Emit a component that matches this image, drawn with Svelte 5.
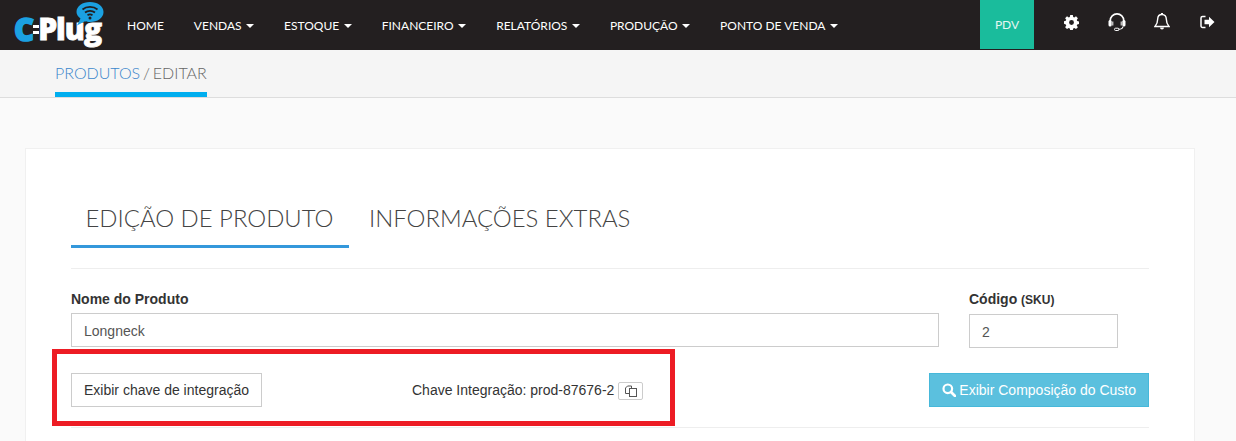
<script lang="ts">
	const menu = [
		{ label: 'HOME', caret: false },
		{ label: 'VENDAS', caret: true },
		{ label: 'ESTOQUE', caret: true },
		{ label: 'FINANCEIRO', caret: true },
		{ label: 'RELATÓRIOS', caret: true },
		{ label: 'PRODUÇÃO', caret: true },
		{ label: 'PONTO DE VENDA', caret: true }
	];
</script>

<div class="page">
	<nav class="navbar">
		<div class="logo">
			<span class="logo-c">C</span><span class="logo-dash"></span><span class="logo-plug">Plug</span>
			<svg class="logo-wifi" width="30" height="26" viewBox="0 0 30 26">
				<path d="M15 1c7.500 0 13.500 4 13.500 10S22.500 21 15 21c-2 0-3.500-.2-5-.8L2 24.500l3.500-7C3 15.500 1.500 13.500 1.500 11 1.500 5 7.500 1 15 1z" fill="#1ba1e2" />
				<path d="M7.500 8.500c4-3.500 11-3.500 15 0M10 11.500c2.800-2.300 7.200-2.300 10 0M12.500 14.300c1.400-1 3.600-1 5 0" fill="none" stroke="#231f20" stroke-width="1.700" />
				<circle cx="15" cy="17" r="1.500" fill="#231f20" />
			</svg>
		</div>
		<ul class="menu">
			{#each menu as item}
				<li>{item.label}{#if item.caret}<span class="caret"></span>{/if}</li>
			{/each}
		</ul>
		<div class="pdv">PDV</div>
		<div class="icons">
			<svg width="15" height="15" viewBox="0 0 16 16">
				<path fill-rule="evenodd" fill="#fff" d="M6.600 0h2.800l.4 2.100 1.200.5L12.800 1.400l2 2-1.200 1.800.5 1.200 1.900.4v2.800l-1.900.4-.5 1.200 1.200 1.800-2 2-1.800-1.200-1.200.5-.4 1.900H6.600l-.4-1.900-1.200-.5-1.800 1.200-2-2 1.200-1.800-.5-1.200L0 9.400V6.600l1.900-.4.5-1.200L1.200 3.400l2-2L5 2.600l1.200-.5zM8 5.400a2.600 2.600 0 1 0 0 5.200 2.600 2.600 0 0 0 0-5.200z" />
			</svg>
			<svg width="18" height="18" viewBox="0 0 18 18">
				<path d="M2.200 10V7.700a6.800 6.800 0 0 1 13.600 0V10" fill="none" stroke="#fff" stroke-width="1.600" />
				<rect x="0.500" y="7" width="3.200" height="6.500" rx="1.600" fill="#fff" />
				<rect x="14.300" y="7" width="3.200" height="6.500" rx="1.600" fill="#fff" />
				<rect x="4.300" y="8.500" width="1" height="4" fill="#fff" />
				<rect x="12.700" y="8.500" width="1" height="4" fill="#fff" />
				<path d="M15 13.500c-.3 2-2 2.800-4.500 2.800" fill="none" stroke="#fff" stroke-width="1.100" />
				<rect x="6.500" y="15.200" width="4.500" height="2.300" rx="1.100" fill="none" stroke="#fff" stroke-width="1" />
			</svg>
			<svg class="bell" width="16" height="18" viewBox="0 0 16 18">
				<path d="M8 1.500c-2.800 0-4.300 2-4.300 4.500 0 3.800-1 5.500-2.700 7.500h14c-1.700-2-2.700-3.700-2.700-7.500 0-2.500-1.500-4.500-4.300-4.500z" fill="none" stroke="#fff" stroke-width="1.400" />
				<rect x="7" y="0" width="2" height="2" fill="#fff" />
				<path d="M6 14.500h4a2 2 0 0 1-4 0z" fill="#fff" />
			</svg>
			<svg width="15" height="14" viewBox="0 0 15 14">
				<path d="M5.500 1.500H2.500a1.500 1.500 0 0 0-1.500 1.500v8a1.500 1.500 0 0 0 1.500 1.500h3" fill="none" stroke="#fff" stroke-width="1.500" />
				<path d="M4.500 4.800h4.500V1.700L14.500 7 9 12.300V9.200H4.500z" fill="#fff" />
			</svg>
		</div>
	</nav>

	<div class="subheader">
		<div class="crumb"><span class="crumb-link">PRODUTOS</span> / EDITAR</div>
	</div>

	<main class="content">
		<section class="card">
			<div class="tabs">
				<div class="tab active">EDIÇÃO DE PRODUTO</div>
				<div class="tab">INFORMAÇÕES EXTRAS</div>
			</div>

			<div class="fields">
				<div class="field name">
					<span class="label">Nome do Produto</span>
					<input type="text" value="Longneck" />
				</div>
				<div class="field sku">
					<span class="label">Código <small>(SKU)</small></span>
					<input type="text" value="2" />
				</div>
			</div>

			<div class="actions">
				<button class="btn">Exibir chave de integração</button>
				<div class="key">
					Chave Integração: prod-87676-2
					<span class="copy">
						<svg width="14" height="12" viewBox="0 0 14 12">
							<path d="M1.500 8.500V3L3.500 1H7.500V4" fill="none" stroke="#555" stroke-width="1" />
							<path d="M1.500 8.500H5" fill="none" stroke="#555" stroke-width="1" />
							<rect x="5.500" y="3.500" width="7" height="8" fill="#fff" stroke="#555" stroke-width="1" />
						</svg>
					</span>
				</div>
				<button class="btn btn-info">
					<svg width="14" height="14" viewBox="0 0 14 14">
						<circle cx="5.800" cy="5.800" r="4.300" fill="none" stroke="#fff" stroke-width="2.200" />
						<path d="M9 9l4 4" stroke="#fff" stroke-width="2.600" stroke-linecap="round" />
					</svg>
					Exibir Composição do Custo
				</button>
			</div>

			<div class="highlight"></div>
		</section>
	</main>
</div>

<style>
	:global(body) {
		margin: 0;
		background: #fafafa;
	}

	.page {
		height: 441px;
		overflow: hidden;
		font-family: 'Liberation Sans', Arial, sans-serif;
		font-size: 14px;
		color: #333;
	}

	.navbar {
		display: flex;
		align-items: center;
		height: 50px;
		background: #231f20;
		font-family: Lato, sans-serif;
	}

	.logo {
		position: relative;
		display: flex;
		align-items: center;
		width: 127px;
		height: 50px;
		padding-left: 14px;
		box-sizing: border-box;
		font-family: 'Open Sans', sans-serif;
		font-weight: 800;
		font-size: 31px;
		letter-spacing: -1px;
		line-height: 1;
	}

	.logo-c {
		color: #1ba1e2;
		margin-top: 8px;
		-webkit-text-stroke: 1.500px #1ba1e2;
	}

	.logo-dash {
		box-sizing: border-box;
		width: 6px;
		height: 9px;
		margin: 9px -1px 0 0;
		border-top: 3px solid #fff;
		border-bottom: 3px solid #fff;
	}

	.logo-plug {
		color: #fff;
		margin-top: 7px;
		-webkit-text-stroke: 0.800px #fff;
		font-size: 30px;
	}

	.logo-wifi {
		position: absolute;
		left: 75px;
		top: 1px;
	}

	.menu {
		display: flex;
		gap: 30px;
		margin: 0;
		padding: 0;
		list-style: none;
		width: 853px;
		color: #fff;
		font-size: 12px;
	}

	.caret {
		display: inline-block;
		margin-left: 4.500px;
		vertical-align: middle;
		border-top: 4px solid #fff;
		border-left: 4px solid transparent;
		border-right: 4px solid transparent;
	}

	.pdv {
		display: flex;
		align-items: center;
		justify-content: center;
		width: 54px;
		height: 49px;
		align-self: flex-start;
		background: #1abc9c;
		color: #e6f7f3;
		font-size: 12px;
	}

	.icons {
		display: flex;
		align-items: center;
		gap: 29px;
		margin-left: 30px;
		margin-top: -6px;
	}

	.bell {
		margin: 0 1px 0 -1px;
	}

	.subheader {
		height: 47px;
		background: #f5f5f5;
		border-bottom: 1px solid #ddd;
		padding-left: 55px;
		font-family: Lato, sans-serif;
	}

	.crumb {
		display: inline-block;
		box-sizing: border-box;
		width: 152px;
		height: 47px;
		padding-top: 13px;
		border-bottom: 5px solid #00aeef;
		font-size: 16px;
		font-weight: 300;
		color: #666;
		white-space: nowrap;
		word-spacing: -1.500px;
	}

	.crumb-link {
		color: #3b87cc;
	}

	.content {
		padding: 50px 41px 0 25px;
	}

	.card {
		position: relative;
		background: #fff;
		border: 1px solid #f0f0f0;
		padding: 35px 45px 0;
		height: 300px;
		box-sizing: border-box;
	}

	.tabs {
		display: flex;
		gap: 5px;
		height: 84px;
		border-bottom: 1px solid #eee;
		font-family: Lato, sans-serif;
		font-size: 23.900px;
		font-weight: 300;
		color: #444;
	}

	.tab {
		box-sizing: border-box;
		height: 64px;
		padding: 19px 16px 0 15px;
		white-space: nowrap;
	}

	.tab.active {
		padding-left: 14.500px;
		padding-right: 15.500px;
		border-bottom: 3px solid #3498db;
	}

	.fields {
		display: flex;
		gap: 30px;
		margin-top: 23px;
	}

	.field {
		display: flex;
		flex-direction: column;
		gap: 6px;
	}

	.name {
		width: 868px;
	}

	.sku {
		width: 149px;
	}

	.label {
		font-weight: 700;
		font-size: 14px;
		line-height: 15px;
		color: #333;
	}

	.label small {
		font-size: 12px;
	}

	input {
		box-sizing: border-box;
		width: 100%;
		height: 34px;
		padding: 1px 12px 0;
		border: 1px solid #ccc;
		border-radius: 0;
		font-family: inherit;
		font-size: 14px;
		color: #555;
	}

	.actions {
		display: flex;
		align-items: center;
		height: 34px;
		margin-top: 25px;
		padding-bottom: 20px;
		border-bottom: 1px solid #eee;
	}

	.btn {
		box-sizing: border-box;
		height: 34px;
		padding: 0 12px;
		background: #fff;
		border: 1px solid #ccc;
		font-family: inherit;
		font-size: 14px;
		color: #333;
		white-space: nowrap;
	}

	.btn-info {
		display: flex;
		align-items: center;
		gap: 3px;
		margin-left: auto;
		background: #5bc0de;
		border-color: #46b8da;
		color: #fff;
	}

	.key {
		display: flex;
		align-items: center;
		gap: 4px;
		margin-left: 150px;
	}

	.copy {
		display: flex;
		align-items: center;
		justify-content: center;
		width: 25px;
		height: 18px;
		margin-top: 2px;
		border: 1px solid #ccc;
		border-radius: 2px;
		box-sizing: border-box;
	}

	.highlight {
		position: absolute;
		left: 26px;
		top: 200px;
		width: 623px;
		height: 77px;
		box-sizing: border-box;
		border: 5px solid #ed1c24;
	}
</style>
